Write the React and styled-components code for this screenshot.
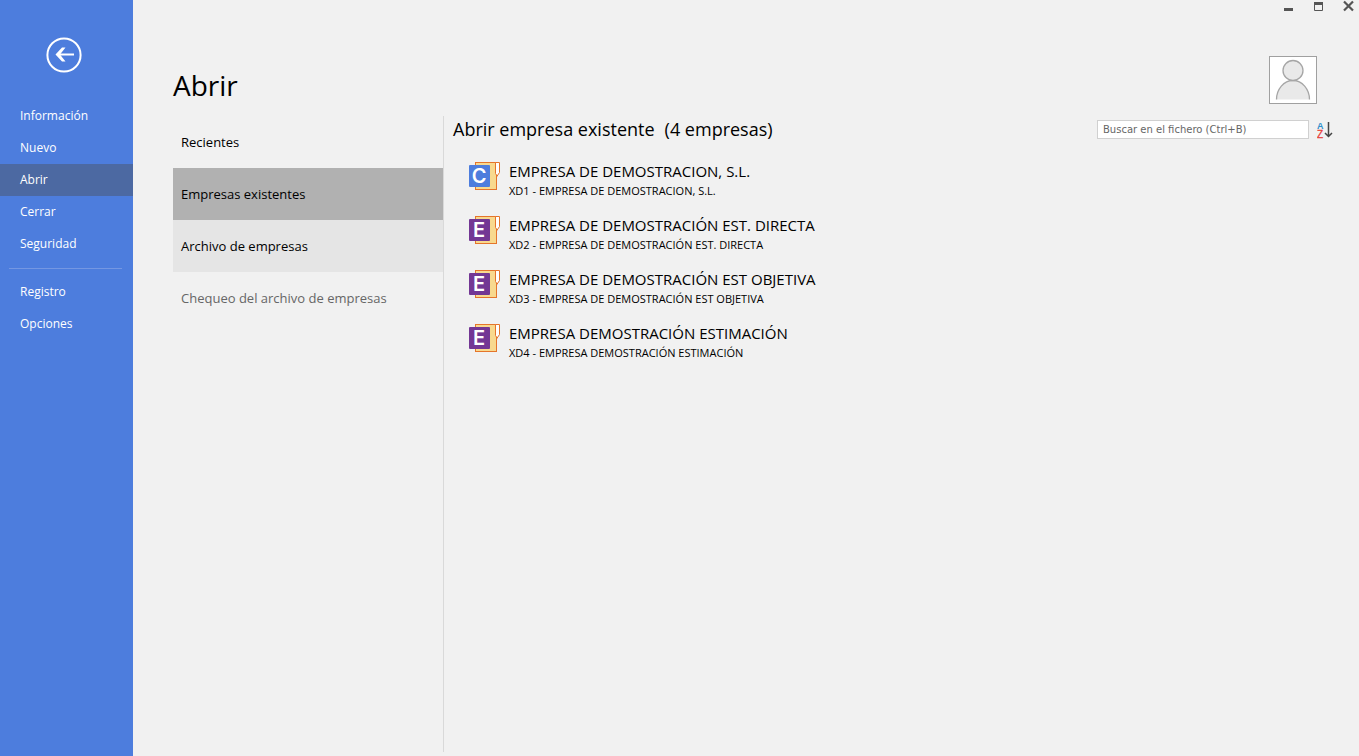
import React, { useState } from "react";
import styled, { createGlobalStyle } from "styled-components";

const mainMenu = ["Información", "Nuevo", "Abrir", "Cerrar", "Seguridad"];
const extraMenu = ["Registro", "Opciones"];

const sources = [
  { id: "recent", label: "Recientes" },
  { id: "existing", label: "Empresas existentes" },
  { id: "archive", label: "Archivo de empresas", shaded: true },
  { id: "check", label: "Chequeo del archivo de empresas", disabled: true },
];

const companies = [
  { code: "XD1", name: "EMPRESA DE DEMOSTRACION, S.L.", letter: "C", color: "#4d7ddd" },
  { code: "XD2", name: "EMPRESA DE DEMOSTRACIÓN EST. DIRECTA", letter: "E", color: "#733794" },
  { code: "XD3", name: "EMPRESA DE DEMOSTRACIÓN EST OBJETIVA", letter: "E", color: "#733794" },
  { code: "XD4", name: "EMPRESA DEMOSTRACIÓN ESTIMACIÓN", letter: "E", color: "#733794" },
];

const BackIcon = () => (
  <svg width="36" height="36" viewBox="0 0 36 36" fill="none" stroke="#fff">
    <circle cx="18" cy="18" r="16.6" strokeWidth="2" />
    <path d="M28 17.5H12" strokeWidth="2" />
    <path d="M9.5 17.5L16 10.5H19.5L14 17.5L19.5 24.5H16Z" fill="#fff" stroke="none" />
  </svg>
);

const CompanyIcon = ({ letter, color }) => (
  <svg width="32" height="30" viewBox="0 0 32 30">
    <rect x="6.5" y="1.5" width="21" height="27" fill="#f8d98e" stroke="#e5752b" />
    <path
      d="M26.5 1.5H30.5V11.5L27.5 16V14L26.5 12.5Z"
      fill="#fff"
      stroke="#e5752b"
    />
    <rect x="0" y="4" width="21" height="22" rx="1" fill={color} />
    <text
      x="10"
      y="22"
      fill="#fff"
      textAnchor="middle"
      fontFamily="Inter, sans-serif"
      fontWeight="600"
      fontSize="20"
    >
      {letter}
    </text>
  </svg>
);

const SortIcon = () => (
  <svg width="16" height="18" viewBox="0 0 16 18">
    <text x="0" y="8" fill="#2f8fcb" fontFamily="Liberation Sans, sans-serif" fontWeight="700" fontSize="9">
      A
    </text>
    <text x="0" y="17" fill="#e8403a" fontFamily="Liberation Sans, sans-serif" fontWeight="400" stroke="#e8403a" strokeWidth="0.3" fontSize="10">
      Z
    </text>
    <path d="M11.5 1V15.5M8 12L11.5 15.5L15 12" fill="none" stroke="#444" strokeWidth="1.5" />
  </svg>
);

const UserIcon = () => (
  <svg width="46" height="46" viewBox="0 0 46 46" fill="#e9e9e9" stroke="#a6a6a6" strokeWidth="1.3">
    <path d="M6.5 42.5A16.5 19 0 0 1 39.5 42.5" />
    <circle cx="23" cy="13.5" r="10" />
  </svg>
);

const App = () => {
  const [menu, setMenu] = useState("Abrir");
  const [source, setSource] = useState("existing");
  const [search, setSearch] = useState("");

  const visible = companies.filter((c) =>
    `${c.code} ${c.name}`.toLowerCase().includes(search.toLowerCase())
  );

  const renderMenu = (items) =>
    items.map((item) => (
      <MenuItem key={item} $active={item === menu} onClick={() => setMenu(item)}>
        {item}
      </MenuItem>
    ));

  return (
    <>
      <GlobalStyle />
      <Shell>
        <Sidebar>
          <BackButton aria-label="Volver">
            <BackIcon />
          </BackButton>
          {renderMenu(mainMenu)}
          <Divider />
          {renderMenu(extraMenu)}
        </Sidebar>

        <Main>
          <WindowBar>
            <WindowButton aria-label="Minimizar">
              <svg width="11" height="12" viewBox="0 0 11 12">
                <path d="M1 9.5H10" stroke="#555" strokeWidth="3" />
              </svg>
            </WindowButton>
            <WindowButton aria-label="Maximizar">
              <svg width="11" height="12" viewBox="0 0 11 12">
                <path d="M1.5 3V10.5H9.5V3" fill="none" stroke="#555" />
                <path d="M1 3.5H10" stroke="#555" strokeWidth="3" />
              </svg>
            </WindowButton>
            <WindowButton aria-label="Cerrar ventana">
              <svg width="11" height="12" viewBox="0 0 11 12">
                <path d="M1 1.5L10 10.5M10 1.5L1 10.5" stroke="#555" strokeWidth="2.2" />
              </svg>
            </WindowButton>
          </WindowBar>

          <Header>
            <Title>Abrir</Title>
            <Avatar>
              <UserIcon />
            </Avatar>
          </Header>

          <Body>
            <SourceList>
              {sources.map((s) => (
                <SourceItem
                  key={s.id}
                  disabled={s.disabled}
                  $active={s.id === source}
                  $shaded={s.shaded}
                  onClick={() => setSource(s.id)}
                >
                  {s.label}
                </SourceItem>
              ))}
            </SourceList>

            <Content>
              <Toolbar>
                <Heading>
                  <span>Abrir empresa existente</span>
                  <span>({companies.length} empresas)</span>
                </Heading>
                <SearchInput
                  type="text"
                  aria-label="Buscar en el fichero"
                  placeholder="Buscar en el fichero (Ctrl+B)"
                  value={search}
                  onChange={(e) => setSearch(e.target.value)}
                />
                <SortButton aria-label="Ordenar">
                  <SortIcon />
                </SortButton>
              </Toolbar>

              {visible.map((c) => (
                <Company key={c.code}>
                  <CompanyIcon letter={c.letter} color={c.color} />
                  <CompanyText>
                    <CompanyName>{c.name}</CompanyName>
                    <CompanyCode>
                      {c.code} - {c.name}
                    </CompanyCode>
                  </CompanyText>
                </Company>
              ))}
            </Content>
          </Body>
        </Main>
      </Shell>
    </>
  );
};

export default App;

const GlobalStyle = createGlobalStyle`
  * {
    box-sizing: border-box;
  }
  body {
    margin: 0;
    background: #f1f1f1;
    color: #000;
    font-family: "Segoe UI", "Open Sans", "Noto Sans", sans-serif;
  }
  button {
    border: 0;
    padding: 0;
    background: none;
    color: inherit;
    font-family: inherit;
    text-align: left;
    cursor: pointer;
  }
  svg {
    display: block;
  }
`;

const Shell = styled.div`
  display: flex;
  min-height: 100vh;
`;

const Sidebar = styled.nav`
  display: flex;
  flex-direction: column;
  flex: 0 0 133px;
  padding-top: 37px;
  background: #4d7ddd;
  color: #fff;
`;

const BackButton = styled.button`
  align-self: flex-start;
  margin: 0 0 27px 46px;
`;

const MenuItem = styled.button`
  height: 32px;
  padding: 0 20px 2px;
  font-size: 12px;
  background: ${({ $active }) => ($active ? "#4c69a2" : "transparent")};
`;

const Divider = styled.hr`
  width: 113px;
  height: 1px;
  margin: 8px 9px 7px;
  border: 0;
  background: #7497e2;
`;

const Main = styled.main`
  display: flex;
  flex: 1;
  flex-direction: column;
  min-width: 0;
  padding-bottom: 4px;
`;

const WindowBar = styled.div`
  display: flex;
  justify-content: flex-end;
  gap: 19px;
  height: 16px;
  padding-right: 5px;
`;

const WindowButton = styled.button`
  height: 12px;
`;

const Header = styled.header`
  display: flex;
  justify-content: space-between;
  height: 60px;
  margin-top: 40px;
  padding: 0 42px 0 40px;
`;

const Title = styled.h1`
  margin: 0;
  font-size: 28px;
  font-weight: 400;
  line-height: 58px;
`;

const Avatar = styled.div`
  width: 48px;
  height: 48px;
  border: 1px solid #a0a0a0;
  background: #fff;
`;

const Body = styled.div`
  display: flex;
  flex: 1;
  padding-left: 40px;
`;

const SourceList = styled.div`
  display: flex;
  flex-direction: column;
  flex: 0 0 271px;
  border-right: 1px solid #d9d9d9;
`;

const SourceItem = styled.button`
  height: 52px;
  padding: 0 8px;
  font-size: 13px;
  background: ${({ $active, $shaded }) =>
    $active ? "#b1b1b1" : $shaded ? "#e5e5e5" : "transparent"};

  &:disabled {
    color: #666;
    cursor: default;
  }
`;

const Content = styled.section`
  flex: 1;
  min-width: 0;
  padding: 0 26px 0 9px;
`;

const Toolbar = styled.div`
  display: flex;
  align-items: center;
  height: 27px;
  margin-bottom: 11px;
`;

const Heading = styled.h2`
  display: flex;
  flex: 1;
  gap: 10px;
  margin: 0;
  padding-bottom: 2px;
  font-size: 18px;
  font-weight: 400;
`;

const SearchInput = styled.input`
  width: 212px;
  height: 19px;
  margin-right: 8px;
  padding: 0 5px;
  border: 1px solid #d0d0d0;
  background: #fff;
  font-family: "DejaVu Sans", sans-serif;
  font-size: 10px;

  &::placeholder {
    color: #666;
    opacity: 1;
  }
`;

const SortButton = styled.button`
  width: 16px;
  height: 18px;
`;

const Company = styled.button`
  display: flex;
  gap: 8px;
  width: 100%;
  height: 54px;
  padding: 7px 16px;
`;

const CompanyText = styled.span`
  display: flex;
  flex-direction: column;
`;

const CompanyName = styled.span`
  font-size: 15px;
  line-height: 20px;
`;

const CompanyCode = styled.span`
  font-size: 11px;
  line-height: 20px;
`;
